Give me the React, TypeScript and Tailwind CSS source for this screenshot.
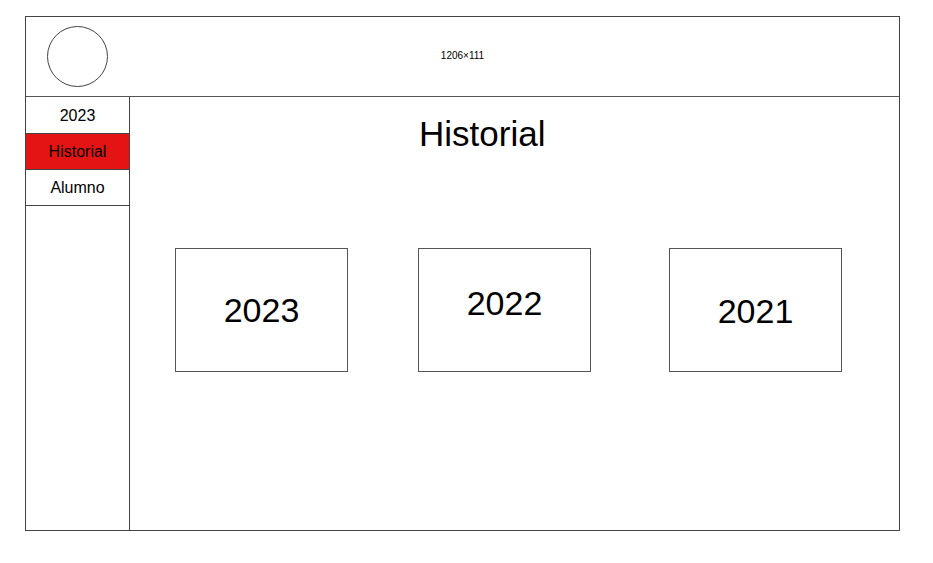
import React from 'react'

const years = [
  { label: '2023', gap: 'ml-[45px]', pad: 'pt-0' },
  { label: '2022', gap: 'ml-[70px]', pad: 'pb-[14px]' },
  { label: '2021', gap: 'ml-[78px]', pad: 'pt-[1px]' },
]

const menu = [
  { label: '2023', active: false, h: 'h-[37px]', pad: 'pt-[2px]' },
  { label: 'Historial', active: true, h: 'h-[36px]', pad: 'pt-0' },
  { label: 'Alumno', active: false, h: 'h-[36px]', pad: 'pt-0' },
]

export default function App() {
  return (
    <div className="h-[563px] w-[933px] bg-white pl-[25px] pt-[16px] font-['Liberation_Sans',Arial,sans-serif] text-black">
      <div className="flex h-[515px] w-[875px] flex-col border border-[#444]">
        {/* header */}
        <div className="relative flex h-[80px] shrink-0 items-center border-b border-[#555]">
          <div className="ml-[21px] h-[61px] w-[61px] rounded-full border border-[#444]" />
          <span className="absolute left-1/2 top-[34px] -translate-x-1/2 text-[10px] leading-none">1206×111</span>
        </div>

        <div className="flex min-h-0 flex-1">
          {/* sidebar */}
          <div className="w-[104px] shrink-0 border-r border-[#444]">
            {menu.map((m) => (
              <div
                key={m.label}
                className={`flex ${m.h} ${m.pad} items-center justify-center border-b border-[#444] text-[16px] ${
                  m.active ? 'bg-[#e51414]' : 'bg-white'
                }`}
              >
                {m.label}
              </div>
            ))}
          </div>

          {/* main */}
          <div className="flex-1">
            <h1 className="mt-[19px] pl-[289px] text-[35px] leading-none">Historial</h1>
            <div className="mt-[97px] flex">
              {years.map((y) => (
                <div
                  key={y.label}
                  className={`${y.gap} flex h-[124px] w-[173px] items-center justify-center border border-[#555] ${y.pad}`}
                >
                  <span className="text-[34px] leading-none">{y.label}</span>
                </div>
              ))}
            </div>
          </div>
        </div>
      </div>
    </div>
  )
}
